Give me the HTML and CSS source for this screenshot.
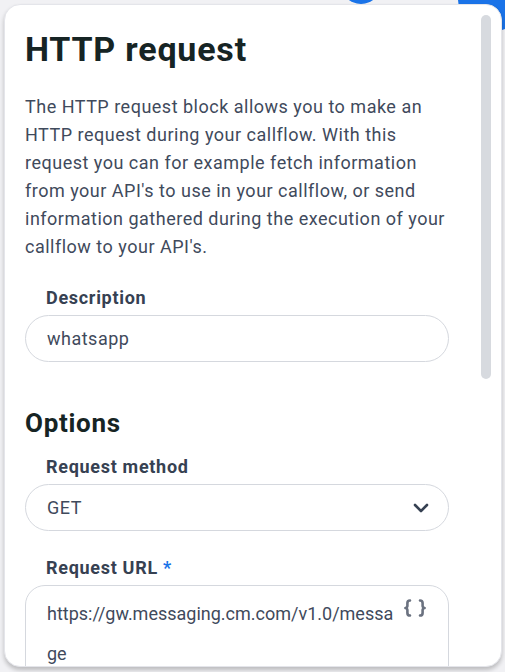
FILE: index.html
```html
<!DOCTYPE html>
<html lang="en">
<head>
    <meta charset="UTF-8">
    <meta name="viewport" content="width=device-width, initial-scale=1.0">
    <title>HTTP request</title>
    <link rel="stylesheet" href="styles.css">
</head>
<body>
    <div class="canvas">
        <!-- flow nodes peeking out behind the panel -->
        <span class="node node-a"></span>
        <span class="node node-b"></span>

        <aside class="panel">
            <div class="panel-body">
                <h1>HTTP request</h1>
                <p class="intro">The HTTP request block allows you to make an HTTP request during your callflow. With this request you can for example fetch information from your API's to use in your callflow, or send information gathered during the execution of your callflow to your API's.</p>

                <div class="field">
                    <label>Description</label>
                    <div class="input">whatsapp</div>
                </div>

                <h2>Options</h2>

                <div class="field">
                    <label>Request method</label>
                    <div class="input select">
                        <span>GET</span>
                        <svg class="chevron" width="16" height="10" viewBox="0 0 16 10">
                            <path d="M2 2l6 6 6-6" fill="none" stroke="#364152" stroke-width="2.6" stroke-linecap="round" stroke-linejoin="round"/>
                        </svg>
                    </div>
                </div>

                <div class="field">
                    <label>Request URL <span class="req">*</span></label>
                    <div class="textarea">
                        <div class="url">https://gw.messaging.cm.com/v1.0/message</div>
                        <svg class="braces" width="24" height="20" viewBox="0 0 24 20">
                            <path d="M7 2.5c-2 0-2.6.8-2.6 2.6v2.6c0 1.2-.6 2-2 2.3 1.4.3 2 1.1 2 2.3v2.6c0 1.8.6 2.6 2.6 2.6M17 2.5c2 0 2.6.8 2.6 2.6v2.6c0 1.2.6 2 2 2.3-1.4.3-2 1.1-2 2.3v2.6c0 1.8-.6 2.6-2.6 2.6" fill="none" stroke="#6b7280" stroke-width="2.6" stroke-linecap="round" stroke-linejoin="round"/>
                        </svg>
                    </div>
                </div>
            </div>
            <div class="scroll-thumb"></div>
        </aside>
    </div>
</body>
</html>
```

FILE: styles.css
```css
body {
    margin: 0;
    font-family: 'Roboto', 'Noto Sans', sans-serif;
    background-color: #f1f1f4;
    color: #3f4a5c;
}
.canvas {
    position: relative;
    width: 505px;
    height: 672px;
    overflow: hidden;
}
.node {
    position: absolute;
    border-radius: 50%;
    background: #1a73e8;
}
.node-a {
    left: 340px;
    top: -40px;
    width: 42px;
    height: 44px;
}
.node-b {
    left: 458px;
    top: -34px;
    width: 66px;
    height: 66px;
}
.panel {
    position: relative;
    margin: 4px 3px 0 4px;
    height: 663px;
    box-sizing: border-box;
    background: white;
    border: 1px solid #e4e5ea;
    border-radius: 16px;
    box-shadow: 0 3px 4px rgba(0,0,0,0.22);
    overflow: hidden;
}
.panel-body {
    padding: 24px 52px 0 20px;
}
h1 {
    margin: 0;
    font-size: 34px;
    line-height: 40px;
    font-weight: 700;
    letter-spacing: 0.8px;
    color: #162424;
}
.intro {
    margin: 24px 0 0;
    font-size: 18px;
    line-height: 28px;
    letter-spacing: 0.5px;
}
.field {
    margin-top: 25px;
}
.field label {
    display: block;
    padding-left: 21px;
    margin-bottom: 5px;
    font-size: 18px;
    line-height: 24px;
    font-weight: 700;
    letter-spacing: 0.7px;
    color: #364152;
}
.req {
    color: #1a73e8;
}
.input {
    height: 47px;
    box-sizing: border-box;
    border: 1.5px solid #d5d8de;
    border-radius: 24px;
    padding: 0 20px 0 21px;
    display: flex;
    align-items: center;
    font-size: 18px;
    letter-spacing: 0.5px;
}
.select {
    justify-content: space-between;
}
.chevron {
    margin-right: -1px;
}
h2 {
    margin: 45px 0 0;
    font-size: 26px;
    line-height: 32px;
    font-weight: 700;
    letter-spacing: 0.7px;
    color: #162424;
}
h2 + .field {
    margin-top: 16px;
}
.textarea {
    position: relative;
    height: 120px;
    box-sizing: border-box;
    border: 1.5px solid #d5d8de;
    border-radius: 20px;
    padding: 8px 48px 0 21px;
    font-size: 18px;
    line-height: 40px;
}
.url {
    word-break: break-all;
}
.braces {
    position: absolute;
    top: 12px;
    right: 21px;
}
.scroll-thumb {
    position: absolute;
    top: 10px;
    right: 10px;
    width: 10px;
    height: 364px;
    border-radius: 5px;
    background: #d7dadf;
}
```
